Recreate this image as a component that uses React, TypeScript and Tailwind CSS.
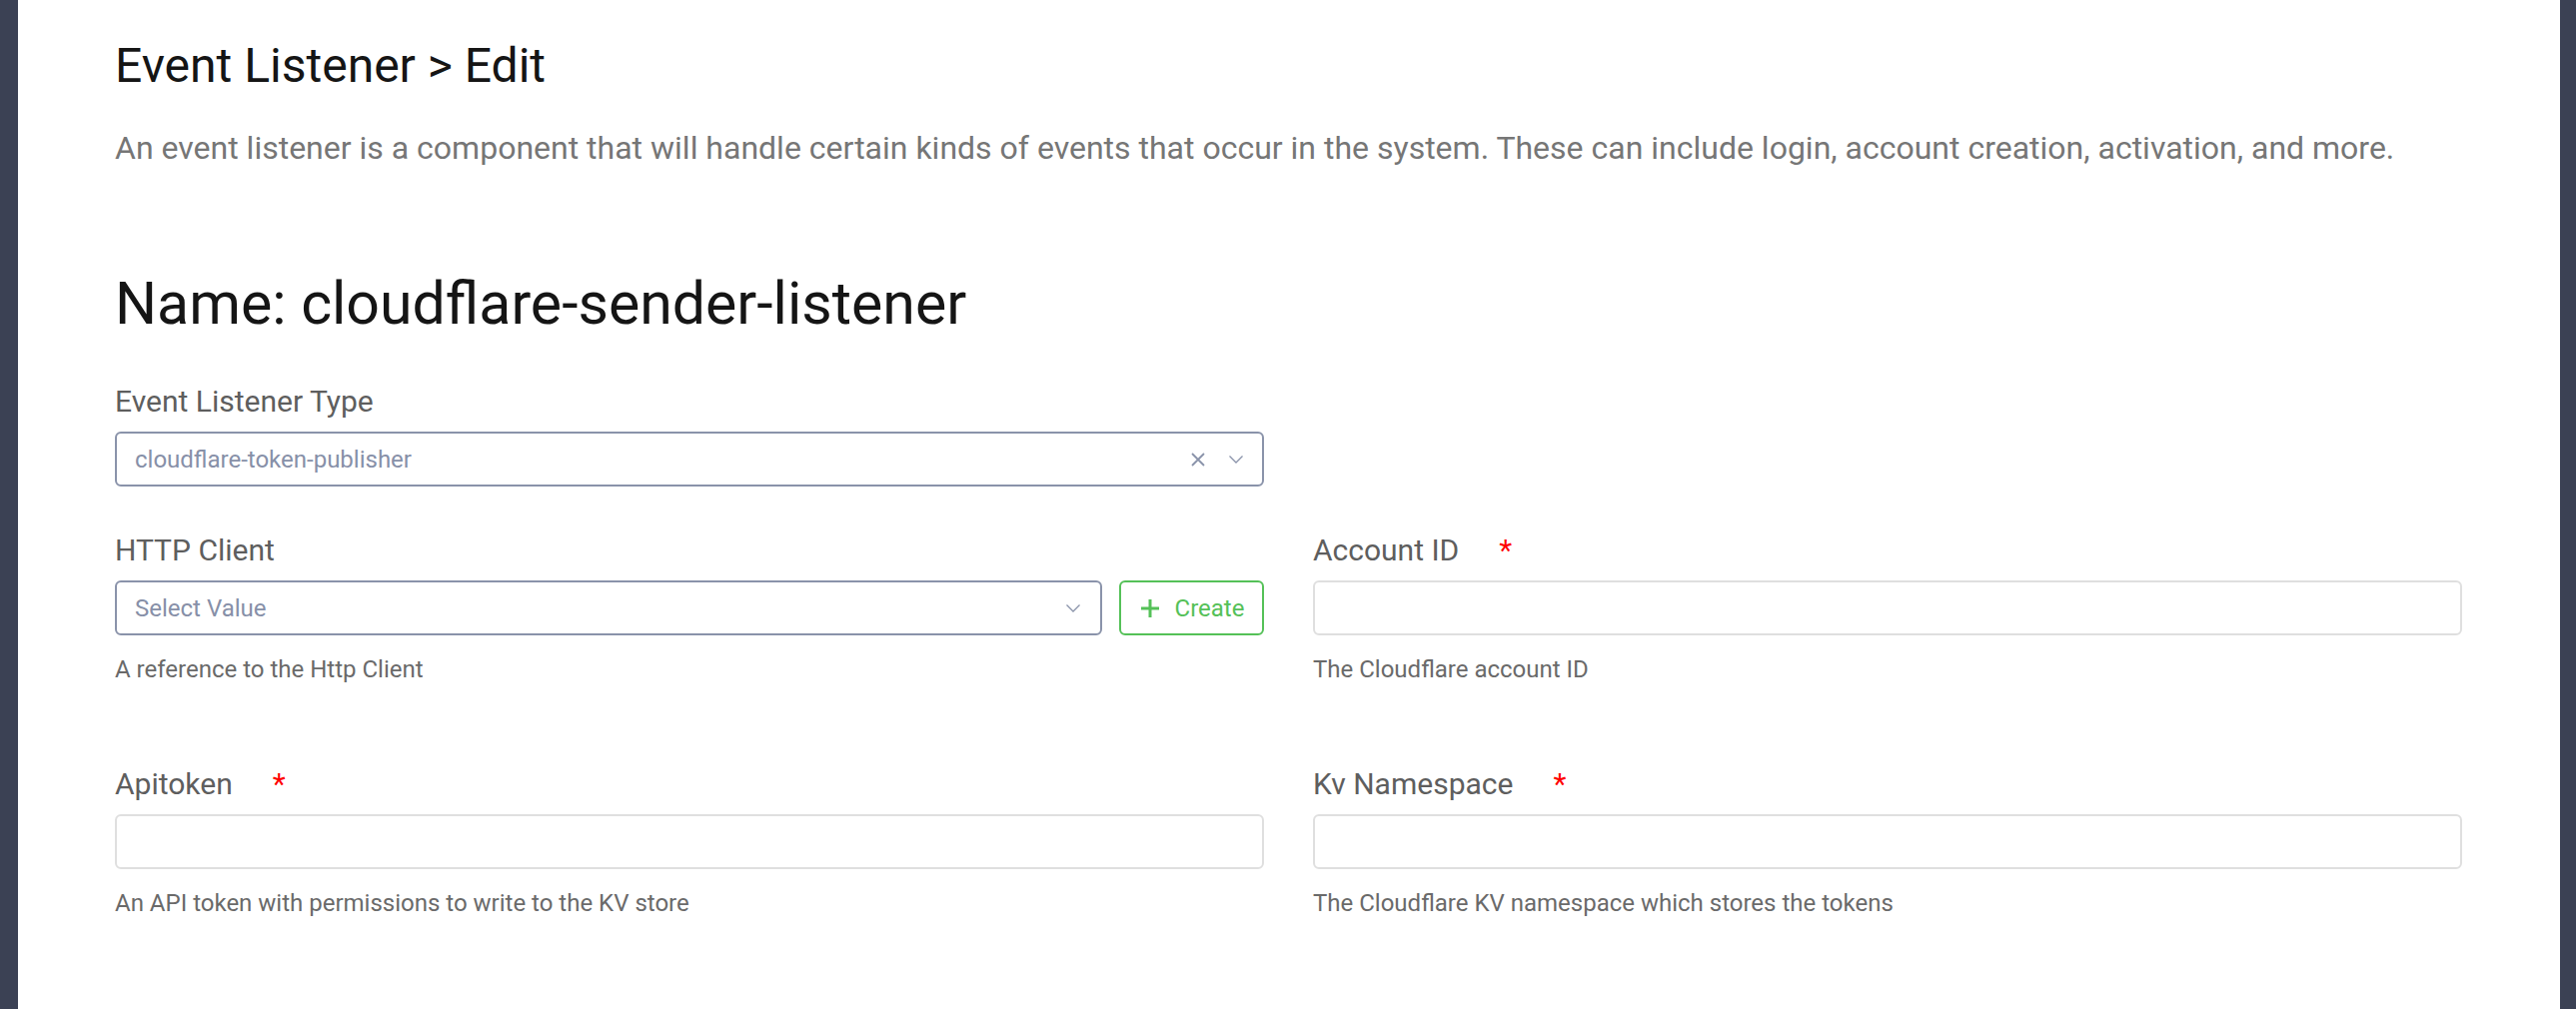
import React from 'react';

const font = { fontFamily: 'Roboto, "Noto Sans", sans-serif' };

// 小图标
const Chevron = () => (
  <svg width="16" height="10" viewBox="0 0 16 10" fill="none">
    <path d="M1.5 1.5 L8 8 L14.5 1.5" stroke="#8a93aa" strokeWidth="1.3" />
  </svg>
);

const Cross = () => (
  <svg width="16" height="16" viewBox="0 0 16 16" fill="none">
    <path d="M2 2 L14 14 M14 2 L2 14" stroke="#8a93aa" strokeWidth="1.8" />
  </svg>
);

const Plus = () => (
  <svg width="22" height="22" viewBox="0 0 22 22" fill="none">
    <path d="M11 2 V20 M2 11 H20" stroke="#55c158" strokeWidth="3" />
  </svg>
);

const Label = ({ text, required }: { text: string; required?: boolean }) => (
  <div className="flex items-start text-[30px] leading-[36px] text-[#5e5e5e] mb-3">
    <span>{text}</span>
    {required && <span className="ml-[40px] text-[#ff0000] text-[30px] leading-[36px]">*</span>}
  </div>
);

const Helper = ({ text }: { text: string }) => (
  <div className="mt-[18px] text-[24px] leading-[32px] text-[#6a6a6a]">{text}</div>
);

const TextInput = () => (
  <div className="h-[55px] w-full rounded-[6px] border-2 border-[#dfdfdf] bg-white" />
);

const App = () => {
  return (
    <div className="flex min-h-[1010px] w-full bg-white" style={font}>
      <div className="w-[18px] shrink-0 bg-[#3b4154]" />
      <main className="flex-1 pl-[97px] pr-[98px] pt-[38px]">
        <h1 className="text-[48px] leading-[56px] text-[#151515]">Event Listener &gt; Edit</h1>
        <p className="mt-[35px] text-[32px] leading-[38px] text-[#767676]">
          An event listener is a component that will handle certain kinds of events that occur in the system. These can include login, account creation, activation, and more.
        </p>
        <h2 className="mt-[101px] text-[59px] leading-[72px] text-[#151515]">Name: cloudflare-sender-listener</h2>

        <div className="mt-[44px] grid grid-cols-2 gap-x-[49px]">
          <div>
            <Label text="Event Listener Type" />
            <div className="flex h-[55px] items-center rounded-[6px] border-2 border-[#8a93aa] bg-white pl-[18px] pr-[18px]">
              <span className="flex-1 text-[24px] text-[#8790a8]">cloudflare-token-publisher</span>
              <span className="mr-[22px] flex"><Cross /></span>
              <Chevron />
            </div>
          </div>
          <div />

          <div className="mt-[46px]">
            <Label text="HTTP Client" />
            <div className="flex gap-[17px]">
              <div className="flex h-[55px] flex-1 items-center rounded-[6px] border-2 border-[#8a93aa] bg-white pl-[18px] pr-[19px]">
                <span className="flex-1 text-[24px] text-[#8790a8]">Select Value</span>
                <Chevron />
              </div>
              <button className="flex h-[55px] w-[145px] items-center justify-center gap-[14px] rounded-[6px] border-2 border-[#55c158] bg-white text-[24px] text-[#55c158]">
                <Plus />
                <span>Create</span>
              </button>
            </div>
            <Helper text="A reference to the Http Client" />
          </div>
          <div className="mt-[46px]">
            <Label text="Account ID" required />
            <TextInput />
            <Helper text="The Cloudflare account ID" />
          </div>

          <div className="mt-[81px]">
            <Label text="Apitoken" required />
            <TextInput />
            <Helper text="An API token with permissions to write to the KV store" />
          </div>
          <div className="mt-[81px]">
            <Label text="Kv Namespace" required />
            <TextInput />
            <Helper text="The Cloudflare KV namespace which stores the tokens" />
          </div>
        </div>
      </main>
      <div className="w-[16px] shrink-0 bg-[#3b4154]" />
    </div>
  );
};

export default App;
